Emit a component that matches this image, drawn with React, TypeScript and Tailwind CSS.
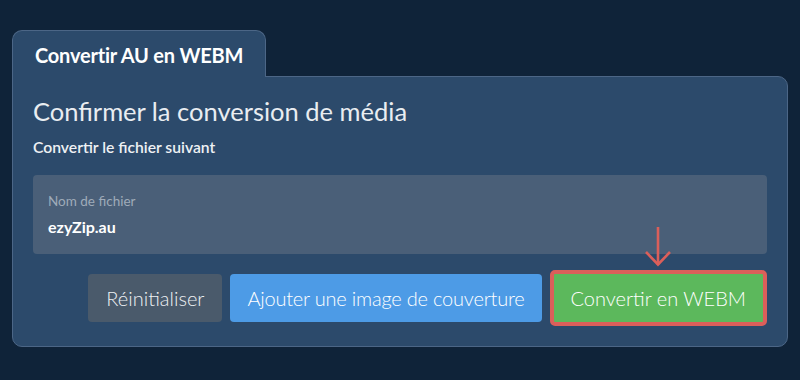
import React from "react";

export default function App() {
  return (
    <div
      className="w-[800px] h-[380px] bg-[#0f2339] pt-[30px] pl-[12px] pr-[12px]"
      style={{ fontFamily: "Lato, 'Noto Sans', sans-serif" }}
    >
      <div className="flex flex-col">
        <div className="flex">
          <div className="relative z-10 -mb-px h-[47px] px-[22px] pt-[12px] bg-[#2c4a6b] border border-b-0 border-[#4c6686] rounded-t-[10px]">
            <span className="block text-[20px] leading-[24px] font-bold text-white tracking-[-0.2px]">
              Convertir AU en WEBM
            </span>
          </div>
        </div>
        <div className="w-[776px] bg-[#2c4a6b] border border-[#4c6686] rounded-b-[10px] rounded-tr-[10px] px-5 pt-[18px] pb-5">
          <h1 className="text-[25.5px] leading-[32px] font-normal text-[#e9edf1]">
            Confirmer la conversion de média
          </h1>
          <p className="mt-[10px] text-[15.7px] leading-[20px] font-semibold text-[#eef1f4]">
            Convertir le fichier suivant
          </p>
          <div className="mt-[18px] h-[79px] rounded-[4px] bg-[#4a5f78] pl-[15px] pt-[17px]">
            <div className="text-[13.5px] leading-[18px] text-[#9fabb9]">Nom de fichier</div>
            <div className="mt-[6px] text-[16px] leading-[22px] font-bold text-white">ezyZip.au</div>
          </div>
          <div className="mt-4 flex items-center justify-end gap-2">
            <button className="h-[48px] px-[18px] rounded-[4px] bg-[#4a5a6b] text-[20px] font-light text-[#eef1f4]">
              Réinitialiser
            </button>
            <button className="h-[48px] px-[17px] rounded-[4px] bg-[#4d9be6] text-[20px] font-light tracking-[-0.2px] text-white">
              Ajouter une image de couverture
            </button>
            <div className="relative">
              <svg
                className="absolute left-1/2 -translate-x-1/2 bottom-full mb-[2px]"
                width="30"
                height="42"
                viewBox="0 0 30 42"
                fill="none"
              >
                <path d="M15 1 V39" stroke="#db5f5a" strokeWidth="2.6" />
                <path d="M3 26 L15 38.5 L27 26" stroke="#db5f5a" strokeWidth="2.6" />
              </svg>
              <button className="h-[56px] px-[17px] rounded-[5px] bg-[#5cb85c] border-[4px] border-[#db5f5a] text-[20px] font-light text-white">
                Convertir en WEBM
              </button>
            </div>
          </div>
        </div>
      </div>
    </div>
  );
}
